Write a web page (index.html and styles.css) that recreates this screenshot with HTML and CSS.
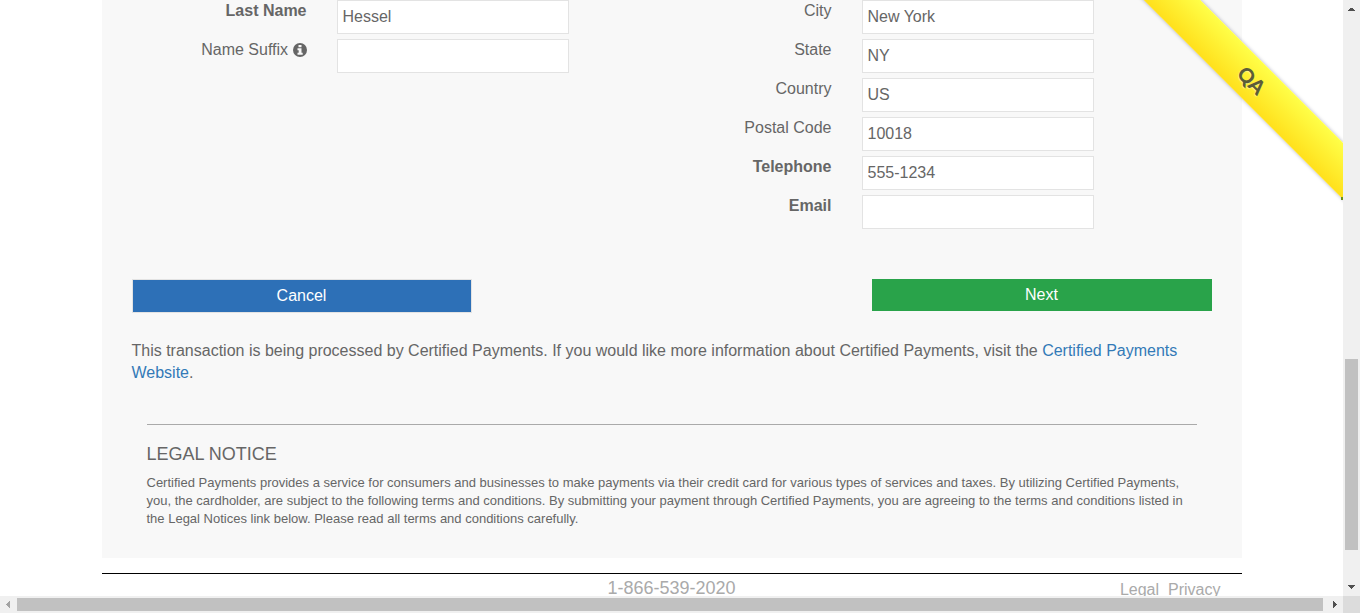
FILE: index.html
```html
<!DOCTYPE html>
<html lang="en">
<head>
<meta charset="utf-8">
<title>Certified Payments</title>
<link rel="stylesheet" href="styles.css">
</head>
<body>
<div class="window">
  <div class="viewport">
    <div class="page">
      <main class="panel">
        <form class="form">
          <div class="columns">
            <div class="column">
              <div class="field"><label class="label required" for="last">Last Name</label><input class="input" id="last" type="text" value="Hessel"></div>
              <div class="field"><label class="label" for="suffix">Name Suffix <svg class="info" viewBox="0 0 14 14" aria-hidden="true"><circle cx="7" cy="7" r="7" fill="currentColor"/><path d="M5.500 2h3v2.200h-3zM4.500 5.200h4v4.600h1.200v2H4.500v-2h1.200V7.200H4.500z" fill="#f8f8f8"/></svg></label><input class="input" id="suffix" type="text"></div>
            </div>
            <div class="column">
              <div class="field"><label class="label" for="city">City</label><input class="input" id="city" type="text" value="New York"></div>
              <div class="field"><label class="label" for="state">State</label><input class="input" id="state" type="text" value="NY"></div>
              <div class="field"><label class="label" for="country">Country</label><input class="input" id="country" type="text" value="US"></div>
              <div class="field"><label class="label" for="postal">Postal Code</label><input class="input" id="postal" type="text" value="10018"></div>
              <div class="field"><label class="label required" for="phone">Telephone</label><input class="input" id="phone" type="tel" value="555-1234"></div>
              <div class="field"><label class="label required" for="email">Email</label><input class="input" id="email" type="email"></div>
            </div>
          </div>
          <div class="actions">
            <button class="button cancel" type="button">Cancel</button>
            <button class="button next" type="submit">Next</button>
          </div>
        </form>
        <p class="notice">This transaction is being processed by Certified Payments. If you would like more information about Certified Payments, visit the <a class="link" href="#">Certified Payments Website</a>.</p>
        <section class="legal">
          <h2 class="legal-title">LEGAL NOTICE</h2>
          <p class="legal-text">Certified Payments provides a service for consumers and businesses to make payments via their credit card for various types of services and taxes. By utilizing Certified Payments, you, the cardholder, are subject to the following terms and conditions. By submitting your payment through Certified Payments, you are agreeing to the terms and conditions listed in the Legal Notices link below. Please read all terms and conditions carefully.</p>
        </section>
      </main>
      <footer class="footer">
        <span class="phone">1-866-539-2020</span>
        <nav class="footer-links"><a href="#">Legal</a><a href="#">Privacy</a></nav>
      </footer>
    </div>
    <div class="ribbon">QA</div>
    <div class="ribbon-end"></div>
  </div>
  <div class="scroll vertical" aria-hidden="true">
    <svg class="arrow" viewBox="0 0 17 17"><path d="M5 11h7v-1h-1V9h-1V8H7v1H6v1H5z" fill="#505050"/></svg>
    <div class="track"><div class="space-before"></div><div class="thumb"></div><div class="space-after"></div></div>
    <svg class="arrow" viewBox="0 0 17 17"><path d="M5 6h7v1h-1v1h-1v1H9v1H8V9H7V8H6V7H5z" fill="#505050"/></svg>
  </div>
  <div class="scroll horizontal" aria-hidden="true">
    <svg class="arrow" viewBox="0 0 17 17"><path d="M10 5v7H9v-1H8v-1H7V9H6V8h1V7h1V6h1V5z" fill="#a3a3a3"/></svg>
    <div class="track"><div class="thumb"></div></div>
    <svg class="arrow" viewBox="0 0 17 17"><path d="M7 5v7h1v-1h1v-1h1V9h1V8h-1V7H9V6H8V5z" fill="#505050"/></svg>
  </div>
  <div class="corner"></div>
</div>
</body>
</html>
```
FILE: styles.css
```css
* { box-sizing: border-box; }
body {
  margin: 0;
  background: #fff;
  color: #666;
  font: 16px/22px Arial, "Liberation Sans", sans-serif;
}
.window {
  display: grid;
  grid-template: minmax(0, 1fr) 17px / minmax(0, 1fr) 17px;
  height: 100vh;
}
.viewport { position: relative; overflow: hidden; }
.page { max-width: 1140px; margin: 0 auto; }
.panel { padding: 0 30px 30px; background: #f8f8f8; }
.columns { display: grid; grid-template-columns: 1fr 1fr; padding: 0 15px; }
.field {
  display: grid;
  grid-template-columns: 4fr 6fr 2fr;
  align-items: start;
  margin-bottom: 5px;
}
.label { padding-right: 15px; text-align: right; }
.required { font-weight: bold; }
.info { width: 14px; height: 14px; vertical-align: -2px; }
.input {
  width: auto;
  min-width: 0;
  height: 34px;
  margin: 0 15px;
  padding: 0 5px;
  border: 1px solid #e3e3e3;
  border-radius: 0;
  background: #fff;
  color: #666;
  font: inherit;
}
.actions {
  display: flex;
  justify-content: space-between;
  align-items: flex-start;
  margin-top: 45px;
}
.button {
  width: 340px;
  height: 32px;
  padding: 0;
  border: 0;
  color: #fff;
  font: inherit;
}
.cancel { height: 34px; border: 1px solid #e3e3e3; background: #2d70b7; }
.next { background: #29a34a; }
.notice { margin: 27px 0 40px; }
.link { color: #337ab7; text-decoration: none; }
.legal { margin: 0 15px; padding-top: 19px; border-top: 1px solid #aaa; }
.legal-title { margin: 0 0 10px; font-size: 18px; line-height: 20px; font-weight: normal; }
.legal-text { margin: 0; font-size: 13px; line-height: 18px; }
.footer {
  display: grid;
  grid-template-columns: 1fr auto 1fr;
  margin-top: 15px;
  padding: 3px 21px 0;
  border-top: 1px solid #000;
  color: #aaa;
}
.phone { grid-column: 2; font-size: 18px; }
.footer-links { display: flex; justify-content: flex-end; gap: 9px; padding-top: 2px; }
.footer-links a { color: inherit; text-decoration: none; }
.ribbon {
  position: absolute;
  top: 60px;
  right: -109px;
  width: 400px;
  height: 40px;
  background: linear-gradient(#ffff48, #ffe01c);
  box-shadow: 0 0 4px rgba(0, 0, 60, 0.3);
  color: #5c5c38;
  font: 900 20px/40px Lato, sans-serif;
  text-align: center;
  text-shadow: 0 1px 1px rgba(255, 255, 255, 0.5);
  transform: rotate(45deg);
}
.ribbon-end { position: absolute; top: 197px; right: 0; width: 2px; height: 3px; background: #6b8f1a; }
.scroll { display: flex; background: #f0f0f0; }
.vertical { flex-direction: column; }
.arrow { flex: none; width: 17px; height: 17px; }
.track { display: flex; flex: 1; min-width: 0; }
.vertical .track { flex-direction: column; padding: 0 2px; }
.horizontal .track { padding: 2px 3px 2px 0; }
.thumb { flex: 1; background: #c1c1c1; }
.space-before { flex: 342; }
.vertical .thumb { flex: 191; }
.space-after { flex: 29; }
.corner { background: #dcdcdc; }
```
